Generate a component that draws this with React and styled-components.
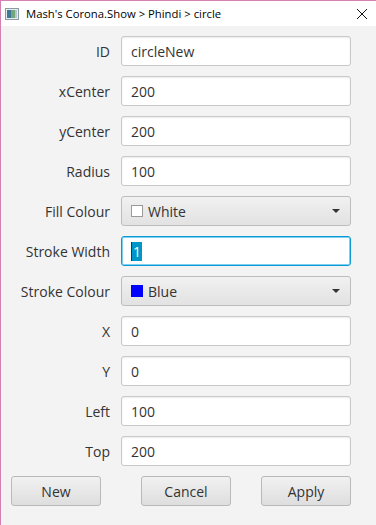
import React from 'react'
import styled, { createGlobalStyle } from 'styled-components'

const Global = createGlobalStyle`
  html, body { margin: 0; padding: 0; background: #f3f3f3; }
  * { box-sizing: border-box; }
`

const Window = styled.div`
  width: 376px;
  height: 525px;
  background: #f3f3f3;
  border-left: 1px solid #d67fb3;
  border-top: 1px solid #d67fb3;
  font-family: "Open Sans", "Noto Sans", sans-serif;
  color: #333;
  display: flex;
  flex-direction: column;
`

const TitleBar = styled.div`
  height: 25px;
  background: #fff;
  display: flex;
  align-items: center;
  padding: 0 8px 0 4px;
  font-size: 11.3px;
  color: #000;
`

const Title = styled.span`
  flex: 1;
  margin-left: 7px;
`

const Form = styled.div`
  display: grid;
  grid-template-columns: 109px 230px;
  column-gap: 11px;
  row-gap: 10px;
  padding-top: 10px;
  align-items: center;
`

const Label = styled.label`
  text-align: right;
  font-size: 14px;
  color: #333;
`

const Input = styled.div`
  height: 30px;
  background: #fff;
  border: ${p => (p.$focused ? '1px solid #0a9ad4' : '1px solid #c8c8c8')};
  box-shadow: ${p => (p.$focused ? '0 0 0 1px #7fd0f0 inset' : 'inset 0 1px 2px rgba(0,0,0,0.08)')};
  border-radius: 3px;
  display: flex;
  align-items: center;
  padding: 0 9px;
  font-size: 14px;
  color: #333;
`

const Select = styled.div`
  height: 30px;
  background: linear-gradient(#f1f1f1, #e2e2e2);
  border: 1px solid #bdbdbd;
  border-radius: 3px;
  display: flex;
  align-items: center;
  padding: 0 10px 0 9px;
  font-size: 14px;
  color: #333;
`

const Swatch = styled.span`
  width: 12px;
  height: 12px;
  background: ${p => p.$color};
  border: 1px solid ${p => (p.$color === '#fff' ? '#9a9a9a' : '#0000ff')};
  margin-right: 5px;
`

const SelectText = styled.span`
  flex: 1;
`

const Arrow = styled.span`
  width: 0;
  height: 0;
  border-left: 4px solid transparent;
  border-right: 4px solid transparent;
  border-top: 4px solid #333;
`

const Selected = styled.span`
  background: #0096c9;
  color: #fff;
  padding: 0 1px;
  border-left: 1px solid #333;
`

const ButtonRow = styled.div`
  display: flex;
  padding: 10px 0 0 10px;
`

const Button = styled.button`
  width: 90px;
  height: 30px;
  margin-left: ${p => p.$gap || 0}px;
  background: linear-gradient(#f1f1f1, #dedede);
  border: 1px solid #b9b9b9;
  border-radius: 3px;
  font-family: inherit;
  font-size: 14px;
  color: #333;
  padding: 0;
`

const AppIcon = () => (
  <svg width="14" height="12" viewBox="0 0 14 12">
    <rect x="0.5" y="0.5" width="13" height="11" fill="#e8edf0" stroke="#8a9aa6" />
    <rect x="2" y="2" width="4" height="8" fill="#3d7a9a" />
    <rect x="6" y="2" width="4" height="8" fill="#74a77a" />
    <rect x="10" y="2" width="2" height="8" fill="#b8c7cf" />
  </svg>
)

const CloseIcon = () => (
  <svg width="12" height="12" viewBox="0 0 12 12">
    <path d="M1 1 L11 11 M11 1 L1 11" stroke="#111" strokeWidth="1" />
  </svg>
)

const fields = [
  ['ID', 'circleNew'],
  ['xCenter', '200'],
  ['yCenter', '200'],
  ['Radius', '100'],
]

const fields2 = [
  ['X', '0'],
  ['Y', '0'],
  ['Left', '100'],
  ['Top', '200'],
]

export default function App() {
  return (
    <Window>
      <Global />
      <TitleBar>
        <AppIcon />
        <Title>Mash's Corona.Show &gt; Phindi &gt; circle</Title>
        <CloseIcon />
      </TitleBar>
      <Form>
        {fields.map(([l, v]) => (
          <React.Fragment key={l}>
            <Label>{l}</Label>
            <Input>{v}</Input>
          </React.Fragment>
        ))}
        <Label>Fill Colour</Label>
        <Select>
          <Swatch $color="#fff" />
          <SelectText>White</SelectText>
          <Arrow />
        </Select>
        <Label>Stroke Width</Label>
        <Input $focused>
          <Selected>1</Selected>
        </Input>
        <Label>Stroke Colour</Label>
        <Select>
          <Swatch $color="#0000ff" />
          <SelectText>Blue</SelectText>
          <Arrow />
        </Select>
        {fields2.map(([l, v]) => (
          <React.Fragment key={l}>
            <Label>{l}</Label>
            <Input>{v}</Input>
          </React.Fragment>
        ))}
      </Form>
      <ButtonRow>
        <Button>New</Button>
        <Button $gap={40}>Cancel</Button>
        <Button $gap={30}>Apply</Button>
      </ButtonRow>
    </Window>
  )
}
